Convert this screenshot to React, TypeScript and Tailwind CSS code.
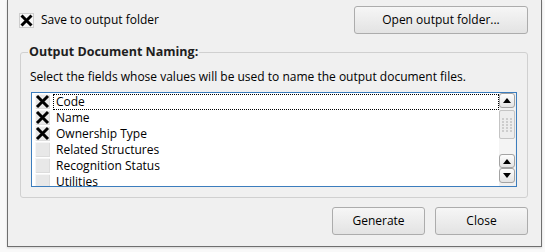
import React from "react";

const XMark = ({ size = 15, inset = 2, width = 3 }: { size?: number; inset?: number; width?: number }) => (
  <svg width={size} height={size} viewBox={`0 0 ${size} ${size}`}>
    <path
      d={`M${inset} ${inset} L${size - inset} ${size - inset} M${size - inset} ${inset} L${inset} ${size - inset}`}
      stroke="#000"
      strokeWidth={width}
      strokeLinecap="butt"
      fill="none"
    />
  </svg>
);

const UpArrow = () => (
  <svg width="8" height="5" viewBox="0 0 8 5">
    <path d="M0 5 L4 0 L8 5 Z" fill="#000" />
  </svg>
);
const DownArrow = () => (
  <svg width="8" height="5" viewBox="0 0 8 5">
    <path d="M0 0 L4 5 L8 0 Z" fill="#000" />
  </svg>
);

const Grip = () => (
  <svg width="10" height="14" viewBox="0 0 10 14">
    {[0, 1, 2].map((c) =>
      [0, 1, 2, 3, 4].map((r) => (
        <rect key={`${c}-${r}`} x={c * 4} y={r * 3} width="2" height="2" fill="#cdcdcd" />
      ))
    )}
  </svg>
);

const items: { label: string; checked: boolean }[] = [
  { label: "Code", checked: true },
  { label: "Name", checked: true },
  { label: "Ownership Type", checked: true },
  { label: "Related Structures", checked: false },
  { label: "Recognition Status", checked: false },
  { label: "Utilities", checked: false },
];

const btn =
  "flex items-center justify-center h-[28px] rounded-[3px] border border-[#acacac] bg-gradient-to-b from-[#f6f6f6] to-[#e3e3e3] text-[12px] text-black";

const sbBtn =
  "flex items-center justify-center w-[16px] rounded-[3px] border border-[#a3a3a3] bg-gradient-to-b from-[#fdfdfd] to-[#e4e4e4]";

export default function App() {
  return (
    <div className="w-[545px] h-[252px] bg-[#f9f9f9] font-['Open_Sans',sans-serif] text-[12px] leading-[16px] text-black overflow-hidden">
      <div className="ml-[7px] w-[535px] h-[247px] bg-[#f0f0f0] border-l border-r border-b border-[#6f6f6f] flex flex-col shadow-[0_1px_2px_rgba(0,0,0,0.15)]">
        {/* top row */}
        <div className="flex items-start justify-between pl-[11px] pr-[13px] pt-[6px]">
          <div className="flex items-center gap-[7px] mt-[6px]">
            <div className="w-[15px] h-[15px] border border-[#cdcdcd] bg-[#f7f7f7] flex items-center justify-center">
              <XMark size={13} inset={1.5} width={3} />
            </div>
            <span>Save to output folder</span>
          </div>
          <button className={`${btn} w-[174px]`}>Open output folder...</button>
        </div>

        {/* group box */}
        <div className="relative ml-[12px] mt-[18px] w-[508px] h-[146px] border border-[#d0d0d0] rounded-[3px] pt-[16px] pl-[9px]">
          <div className="absolute top-[-9px] left-[7px] px-[1px] bg-[#f0f0f0] font-bold text-[12.5px] text-[#1e1e1e]">
            Output Document Naming:
          </div>
          <div>Select the fields whose values will be used to name the output document files.</div>
          <div className="mt-[7px] ml-[1px] w-[486px] h-[95px] border border-[#3c7dbd] bg-white flex">
            <div className="flex-1 overflow-hidden pt-[1px] pl-[3px]">
              {items.map((it, i) => (
                <div key={it.label} className="flex h-[16px] items-start">
                  <div className="w-[15px] h-[15px] bg-[#e8e8e8] shadow-[inset_1px_1px_0_#f6f6f6,inset_-1px_-1px_0_#dcdcdc] flex items-center justify-center shrink-0">
                    {it.checked && <XMark size={15} inset={2} width={3} />}
                  </div>
                  <div
                    className={`ml-[3px] flex-1 h-[16px] pl-[3px] whitespace-nowrap ${
                      i === 0 ? "outline-1 outline-dotted outline-black -outline-offset-1" : ""
                    }`}
                  >
                    {it.label}
                  </div>
                </div>
              ))}
            </div>
            {/* scrollbar */}
            <div className="w-[17px] flex flex-col bg-[#f0f0f0]">
              <div className={`${sbBtn} h-[15px]`}>
                <UpArrow />
              </div>
              <div className="mt-[2px] w-[16px] h-[29px] rounded-[2px] border border-[#c4c4c4] bg-[#ededed] flex items-center justify-center">
                <Grip />
              </div>
              <div className="w-[16px] h-[15px] bg-[#f4f4f4]" />
              <div className={`${sbBtn} h-[14px]`}>
                <UpArrow />
              </div>
              <div className={`${sbBtn} h-[15px]`}>
                <DownArrow />
              </div>
            </div>
          </div>
        </div>

        {/* bottom buttons */}
        <div className="flex justify-end gap-[10px] pr-[13px] mt-[9px]">
          <button className={`${btn} w-[93px]`}>Generate</button>
          <button className={`${btn} w-[93px]`}>Close</button>
        </div>
      </div>
    </div>
  );
}
